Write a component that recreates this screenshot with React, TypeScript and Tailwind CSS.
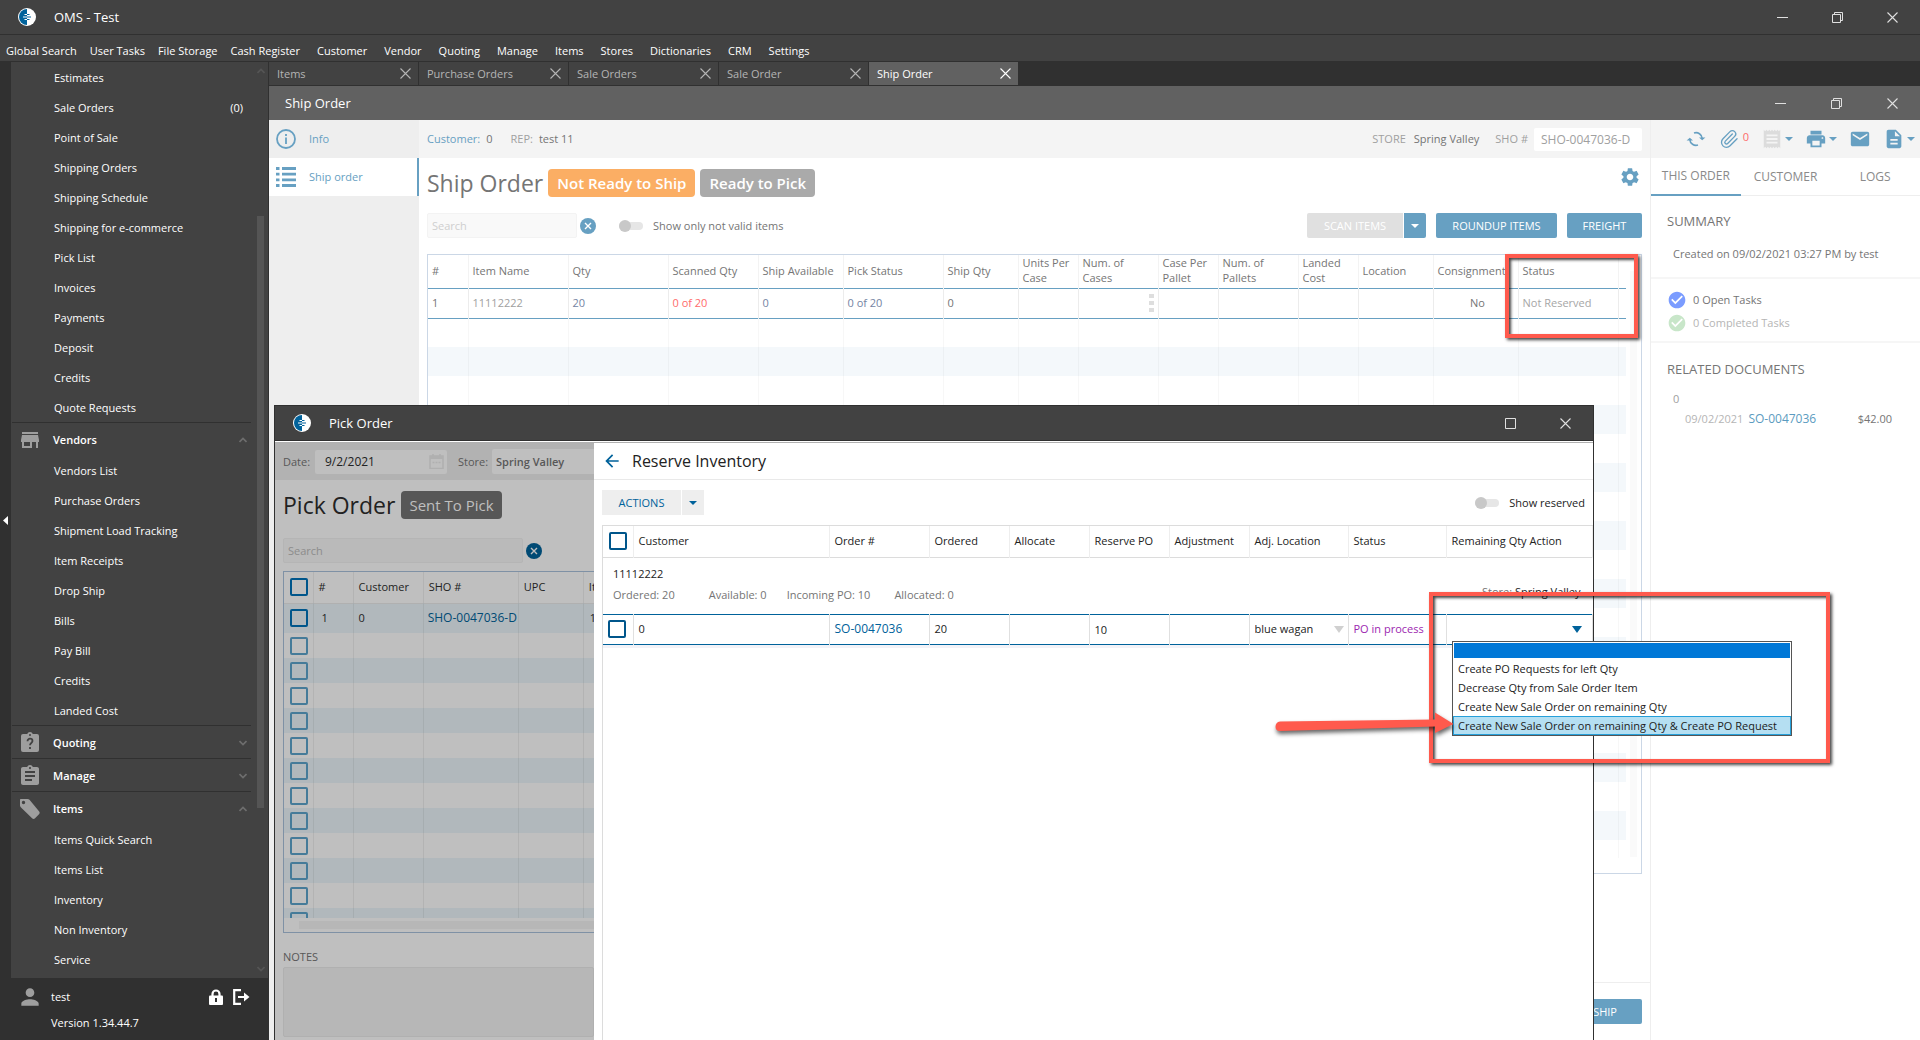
import type { ReactNode } from 'react'
import { Paperclip } from 'lucide-react'
import {
  MdArrowBack,
  MdAssignment,
  MdCheckCircle,
  MdDescription,
  MdEmail,
  MdPerson,
  MdPrint,
  MdReceipt,
  MdSettings,
  MdStore,
} from 'react-icons/md'

const menuItems = [
  'Global Search', 'User Tasks', 'File Storage', 'Cash Register', 'Customer', 'Vendor', 'Quoting',
  'Manage', 'Items', 'Stores', 'Dictionaries', 'CRM', 'Settings',
]

const tabs = ['Items', 'Purchase Orders', 'Sale Orders', 'Sale Order', 'Ship Order']

const customerLinks = [
  'Estimates', 'Sale Orders', 'Point of Sale', 'Shipping Orders', 'Shipping Schedule',
  'Shipping for e-commerce', 'Pick List', 'Invoices', 'Payments', 'Deposit', 'Credits', 'Quote Requests',
]

const vendorLinks = [
  'Vendors List', 'Purchase Orders', 'Shipment Load Tracking', 'Item Receipts', 'Drop Ship', 'Bills',
  'Pay Bill', 'Credits', 'Landed Cost',
]

const itemLinks = ['Items Quick Search', 'Items List', 'Inventory', 'Non Inventory', 'Service']

const shipColumns = [
  { label: '#', width: 'w-[40px]', value: '1', tone: 'text-[#757575]' },
  { label: 'Item Name', width: 'w-[100px]', value: '11112222', tone: 'font-medium text-[#a0a0a0]' },
  { label: 'Qty', width: 'w-[100px]', value: '20', tone: 'text-[#7484a3]' },
  { label: 'Scanned Qty', width: 'w-[90px]', value: '0 of 20', tone: 'text-[#ff6b6b]' },
  { label: 'Ship Available', width: 'w-[85px]', value: '0', tone: 'text-[#7484a3]' },
  { label: 'Pick Status', width: 'w-[100px]', value: '0 of 20', tone: 'text-[#7484a3]' },
  { label: 'Ship Qty', width: 'w-[75px]', value: '0', tone: 'text-[#757575]' },
  { label: 'Units Per\nCase', width: 'w-[60px]', value: '', tone: '' },
  { label: 'Num. of\nCases', width: 'w-[80px]', value: '', tone: '' },
  { label: 'Case Per\nPallet', width: 'w-[60px]', value: '', tone: '' },
  { label: 'Num. of\nPallets', width: 'w-[80px]', value: '', tone: '' },
  { label: 'Landed\nCost', width: 'w-[60px]', value: '', tone: '' },
  { label: 'Location', width: 'w-[75px]', value: '', tone: '' },
  { label: 'Consignment', width: 'w-[85px]', value: 'No', tone: 'pl-0 text-center text-[#757575]' },
  { label: 'Status', width: 'w-[100px]', value: 'Not Reserved', tone: 'text-[#a6a6a6]' },
]

const pickColumns = [
  { label: '#', width: 'w-[40px]' },
  { label: 'Customer', width: 'w-[70px]' },
  { label: 'SHO #', width: 'w-[95px]' },
  { label: 'UPC', width: 'w-[65px]' },
  { label: 'Item Name', width: 'w-[120px]' },
]

const reserveColumns = [
  { label: 'Customer', width: 'w-[196px]' },
  { label: 'Order #', width: 'w-[100px]' },
  { label: 'Ordered', width: 'w-[80px]' },
  { label: 'Allocate', width: 'w-[80px]' },
  { label: 'Reserve PO', width: 'w-[80px]' },
  { label: 'Adjustment', width: 'w-[80px]' },
  { label: 'Adj. Location', width: 'w-[99px]' },
  { label: 'Status', width: 'w-[98px]' },
  { label: 'Remaining Qty Action', width: '' },
]

const qtyActions = [
  'Create PO Requests for left Qty',
  'Decrease Qty from Sale Order Item',
  'Create New Sale Order on remaining Qty',
  'Create New Sale Order on remaining Qty & Create PO Request',
]

function Logo() {
  return (
    <svg className="size-[18px] shrink-0" viewBox="0 0 18 18" aria-hidden="true">
      <circle cx="9" cy="9" r="9" fill="#fff" />
      <path d="M9 1a8 8 0 0 0 0 16z" fill="#00629b" />
      <path d="M6.500 6.500H9M5 9h4M6.500 11.500H9" stroke="#fff" strokeWidth="1.200" />
      <path d="M9 6.500h2.500M9 9h4M9 11.500h2.500" stroke="#00629b" strokeWidth="1.200" />
      <path d="M7.500 9h3" stroke="#7fb0cd" strokeWidth="1.200" />
    </svg>
  )
}

function CloseIcon({ className = 'size-[11px]' }: { className?: string }) {
  return (
    <svg className={className} viewBox="0 0 11 11" fill="none" stroke="currentColor" aria-hidden="true">
      <path d="M.5.5l10 10M10.5.5l-10 10" strokeWidth="1.1" />
    </svg>
  )
}

function ClearIcon() {
  return (
    <svg className="size-2" viewBox="0 0 8 8" fill="none" stroke="currentColor" aria-hidden="true">
      <path d="M1 1l6 6M7 1L1 7" strokeWidth="1.400" />
    </svg>
  )
}

function Caret({ className = 'text-[#67a0c2]' }: { className?: string }) {
  return (
    <svg className={`h-1 w-2 shrink-0 ${className}`} viewBox="0 0 8 4" aria-hidden="true">
      <path d="M0 0h8L4 4z" fill="currentColor" />
    </svg>
  )
}

function Chevron({ up = false, className = 'text-[#6e6e6e]' }: { up?: boolean; className?: string }) {
  return (
    <svg className={`h-[6px] w-2 shrink-0 ${className}`} viewBox="0 0 8 6" fill="none" stroke="currentColor" aria-hidden="true">
      <path d={up ? 'M.5 5L4 1.500l3.500 3.500' : 'M.5 1L4 4.500 7.500 1'} strokeWidth="1.700" />
    </svg>
  )
}

function WindowButtons({ kind, width }: { kind: 'full' | 'dialog'; width: string }) {
  const button = `flex h-full items-center justify-center text-[#e0e0e0] ${width}`
  return (
    <div className="ml-auto flex h-full">
      {kind === 'full' && (
        <button className={button} aria-label="Minimize">
          <svg className="size-[11px]" viewBox="0 0 11 11" aria-hidden="true">
            <path d="M0 5.500h11" stroke="currentColor" />
          </svg>
        </button>
      )}
      <button className={button} aria-label="Maximize">
        <svg className="size-[11px]" viewBox="0 0 11 11" fill="none" stroke="currentColor" aria-hidden="true">
          {kind === 'full' ? <path d="M.5 2.500h8v8h-8zM2.500 2.500v-2h8v8h-2" /> : <path d="M.5 .5h10v10h-10z" />}
        </svg>
      </button>
      <button className={button} aria-label="Close">
        <CloseIcon />
      </button>
    </div>
  )
}

function Checkbox({ label, faded = false }: { label: string; faded?: boolean }) {
  return (
    <input
      type="checkbox"
      aria-label={label}
      className={`block size-[18px] appearance-none rounded-xs border-2 ${faded ? 'border-[#457b99]' : 'border-[#00568b]'}`}
    />
  )
}

function Toggle({ label, tone }: { label: string; tone: string }) {
  return (
    <label className={`flex items-center gap-2.5 ${tone}`}>
      <input
        type="checkbox"
        role="switch"
        className="h-2 w-6 appearance-none rounded-full bg-[#e6e6e6] before:-mt-0.5 before:block before:size-3 before:rounded-full before:bg-[#c8c8c8]"
      />
      {label}
    </label>
  )
}

function SidebarLinks({ links }: { links: string[] }) {
  return (
    <ul>
      {links.map((link) => (
        <li key={link}>
          <a href="#" className="flex h-[30px] items-center justify-between pt-0.5 pr-2 pl-[42px]">
            {link}
            {link === 'Sale Orders' && <span>(0)</span>}
          </a>
        </li>
      ))}
    </ul>
  )
}

function SidebarSection({ icon, label, open, children }: { icon: ReactNode; label: string; open?: boolean; children?: ReactNode }) {
  return (
    <section>
      <button className="flex h-[33px] w-full items-center border-t border-[#303030] pt-0.5 pr-1 pl-1.5 font-semibold">
        <span className="w-[35px] text-[#9e9e9e]">{icon}</span>
        <span>{label}</span>
        <span className="ml-auto">
          <Chevron up={open} />
        </span>
      </button>
      {children}
    </section>
  )
}

function Sidebar() {
  return (
    <aside className="flex w-[269px] shrink-0 flex-col border-r border-[#303030] bg-[#303030] text-white">
      <div className="flex min-h-0 flex-1">
        <button className="flex w-[11px] items-center justify-center" aria-label="Collapse sidebar">
          <svg className="h-[9px] w-[5px]" viewBox="0 0 5 9" aria-hidden="true">
            <path d="M5 0v9L0 4.500z" fill="#fff" />
          </svg>
        </button>
        <nav className="min-w-0 flex-1 overflow-hidden bg-[#424242] pr-0.5 pl-px">
          <SidebarLinks links={customerLinks} />
          <SidebarSection icon={<MdStore className="size-6" />} label="Vendors" open>
            <SidebarLinks links={vendorLinks} />
          </SidebarSection>
          <SidebarSection
            label="Quoting"
            icon={
              <svg className="size-6" viewBox="0 0 24 24" fill="currentColor" aria-hidden="true">
                <path d="M19 3h-4.200a3 3 0 0 0-5.600 0H5a2 2 0 0 0-2 2v14a2 2 0 0 0 2 2h14a2 2 0 0 0 2-2V5a2 2 0 0 0-2-2zm-7 0a1 1 0 1 1 0 2 1 1 0 0 1 0-2z" />
                <path d="M9.500 10.200c0-3.400 5-3.200 5-.2 0 2-2.500 2-2.500 4.200M12 16v2" fill="none" stroke="#424242" strokeWidth="1.800" />
              </svg>
            }
          />
          <SidebarSection icon={<MdAssignment className="size-6" />} label="Manage" />
          <SidebarSection
            label="Items"
            open
            icon={
              <svg className="size-6" viewBox="0 0 24 24" fill="currentColor" aria-hidden="true">
                <path d="M3 2h6.500c.8 0 1.500.3 2 .8l9.700 11.700c.7.800.6 2-.2 2.700L16.800 21.500c-.8.700-2 .600-2.700-.2L3 10.500C2.400 10 2 9.300 2 8.500V3c0-.6.4-1 1-1zm2.500 1.800a1.700 1.700 0 1 0 0 3.400 1.700 1.700 0 0 0 0-3.400z" />
              </svg>
            }
          >
            <SidebarLinks links={itemLinks} />
          </SidebarSection>
        </nav>
        <div className="flex w-[15px] flex-col items-center bg-[#424242] py-1.5">
          <Chevron up className="text-[#555]" />
          <span className="mt-[142px] mb-[158px] w-[7px] flex-1 bg-[#555]" />
          <Chevron className="text-[#555]" />
        </div>
      </div>
      <footer className="h-[62px] pl-[17px] font-medium">
        <div className="flex h-[37px] items-center pr-[18px]">
          <MdPerson className="size-[26px] text-[#9e9e9e]" />
          <span className="ml-2">test</span>
          <button className="ml-auto" aria-label="Lock">
            <svg className="h-4 w-3.5" viewBox="0 0 14 16" aria-hidden="true">
              <path d="M3.500 8V5a3.500 3.500 0 0 1 7 0v3" fill="none" stroke="#fff" strokeWidth="2.200" />
              <rect y="6.500" width="14" height="9.500" rx="1" fill="#fff" />
              <path d="M6 9h2v4H6z" fill="#303030" />
            </svg>
          </button>
          <button className="ml-2.5" aria-label="Log out">
            <svg className="h-4 w-[17px]" viewBox="0 0 17 16" fill="none" stroke="#fff" strokeWidth="2.200" aria-hidden="true">
              <path d="M8 1.200H1.200v13.600H8M5 8h9" />
              <path d="M11 3.500L16.500 8 11 12.500z" fill="#fff" stroke="none" />
            </svg>
          </button>
        </div>
        <p className="pl-[34px]">Version 1.34.44.7</p>
      </footer>
    </aside>
  )
}

function ShipTable() {
  return (
    <div className="mb-[108px] flex min-h-0 flex-1 border border-[#cbd7e6]">
      <div className="mb-[15px] min-w-0 flex-1 overflow-hidden">
        <table className="w-full table-fixed border-collapse text-left">
          <colgroup>
            {shipColumns.map((col) => (
              <col key={col.label} className={col.width} />
            ))}
            <col />
          </colgroup>
          <thead>
            <tr className="h-[33px] border-b border-[#67a0c2]">
              {shipColumns.map((col) => (
                <th key={col.label} className="overflow-hidden border-r border-[#f3f3f3] p-0 pb-0.5 pl-1 leading-[15px] font-normal whitespace-pre text-[#757575]">
                  {col.label}
                </th>
              ))}
              <th className="p-0" />
            </tr>
          </thead>
          <tbody>
            <tr className="h-[30px] border-b border-[#67a0c2]">
              {shipColumns.map((col) => (
                <td key={col.label} className={`border-r border-[#ececec] p-0 pl-1 ${col.tone}`}>
                  {col.label === 'Num. of\nCases' ? (
                    <span className="mr-1 ml-auto grid w-[5px] gap-[3px]">
                      <i className="h-1 bg-[#dedede]" />
                      <i className="h-1 bg-[#dedede]" />
                      <i className="h-1 bg-[#dedede]" />
                    </span>
                  ) : (
                    col.value
                  )}
                </td>
              ))}
              <td className="p-0" />
            </tr>
            {Array.from({ length: 19 }, (_, row) => (
              <tr key={row} className="h-[29px] even:bg-white odd:bg-[#f4f8fb]">
                {shipColumns.map((col) => (
                  <td key={col.label} className="border-r border-black/3 p-0" />
                ))}
                <td className="p-0" />
              </tr>
            ))}
          </tbody>
        </table>
      </div>
      <div className="flex w-[15px] flex-col items-center py-4">
        <span className="w-[7px] flex-1 bg-[#fafafa]" />
      </div>
    </div>
  )
}

function ShipOrder() {
  const primary = 'h-[25px] rounded-xs bg-[#67a0c2] text-white'
  const badge = 'flex h-7 items-center rounded-sm px-[9px] text-[15px] font-semibold whitespace-nowrap text-white'
  return (
    <main className="flex min-w-0 flex-1 flex-col bg-white text-[#757575]">
      <header className="flex h-[38px] items-center bg-[#f4f4f4] pr-2 pl-2">
        <span className="text-[#67a0c2]">Customer:</span>
        <span className="ml-1.5">0</span>
        <span className="ml-[18px] text-[#a0a0a0]">REP:</span>
        <span className="ml-1.5">test 11</span>
        <span className="ml-auto text-[#a0a0a0]">STORE</span>
        <span className="ml-2">Spring Valley</span>
        <label className="ml-4 flex items-center gap-1.5 text-[#a0a0a0]">
          SHO #
          <input className="h-[23px] w-[108px] rounded-xs bg-white px-[7px] text-xs" defaultValue="SHO-0047036-D" />
        </label>
      </header>
      <div className="flex min-h-0 flex-1 flex-col pr-2 pl-2">
        <div className="flex h-[50px] items-center gap-[5px]">
          <h1 className="text-[23px] text-[#757575]">Ship Order</h1>
          <span className={`bg-[#fbae64] ${badge}`}>Not Ready to Ship</span>
          <span className={`bg-[#aaa] ${badge}`}>Ready to Pick</span>
          <button className="mr-px mb-3 ml-auto text-[#67a0c2]" aria-label="Settings">
            <MdSettings className="size-[22px]" />
          </button>
        </div>
        <div className="mt-[5px] mb-4 flex h-[25px] items-center">
          <input
            className="h-[25px] w-[150px] rounded-xs border border-[#f3f3f3] bg-[#f9f9f9] px-1 placeholder:text-[#cfcfcf]"
            placeholder="Search"
            aria-label="Search items"
          />
          <button className="ml-[3px] flex size-4 items-center justify-center rounded-full bg-[#67a0c2] text-white" aria-label="Clear search">
            <ClearIcon />
          </button>
          <div className="ml-[23px]">
            <Toggle label="Show only not valid items" tone="text-[#757575]" />
          </div>
          <button className="ml-auto h-[25px] w-24 rounded-l-xs bg-[#e0e0e0] text-white" disabled>
            SCAN ITEMS
          </button>
          <button className="ml-px flex h-[25px] w-[22px] items-center justify-center rounded-r-xs bg-[#67a0c2]" aria-label="Scan options">
            <Caret className="text-white" />
          </button>
          <button className={`ml-2.5 w-[121px] ${primary}`}>ROUNDUP ITEMS</button>
          <button className={`ml-2.5 w-[75px] ${primary}`}>FREIGHT</button>
        </div>
        <ShipTable />
      </div>
      <footer className="flex h-[58px] items-center justify-end border-t border-[#eee] pr-2">
        <button className={`px-[25px] ${primary}`}>SHIP</button>
      </footer>
    </main>
  )
}

function OrderInfo() {
  return (
    <aside className="w-[270px] shrink-0 border-l border-[#eee] bg-white text-[#757575]">
      <div className="flex h-[38px] items-center justify-end gap-3 bg-[#f4f4f4] pr-[5px] text-[#67a0c2]">
        <button aria-label="Refresh">
          <svg className="size-[22px]" viewBox="0 0 22 22" fill="none" stroke="currentColor" strokeWidth="1.600" aria-hidden="true">
            <path d="M17.200 10.500A6.200 6.200 0 0 0 9 5M4.800 11.500A6.200 6.200 0 0 0 13 17" />
            <path d="M14 9.500l3.200 2.800 3.200-2.800zM1.600 12.500l3.200-2.800L8 12.500z" fill="currentColor" stroke="none" />
          </svg>
        </button>
        <button className="flex items-center gap-1" aria-label="Attachments">
          <Paperclip className="size-5" strokeWidth={1.600} />
          <span className="mb-1 text-[#ff6b6b]">0</span>
        </button>
        <button className="flex items-center gap-0.5" aria-label="Receipt">
          <MdReceipt className="size-[22px] text-[#dcdcdc]" />
          <Caret />
        </button>
        <button className="flex items-center gap-0.5" aria-label="Print">
          <MdPrint className="size-[22px]" />
          <Caret />
        </button>
        <button aria-label="Email">
          <MdEmail className="size-[22px]" />
        </button>
        <button className="flex items-center gap-0.5" aria-label="Documents">
          <MdDescription className="size-[22px]" />
          <Caret />
        </button>
      </div>
      <div className="grid h-[38px] grid-cols-3 border-b border-[#eee] text-xs text-[#8a8a8a]">
        <button className="-mb-px border-b-2 border-[#67a0c2]">THIS ORDER</button>
        <button>CUSTOMER</button>
        <button>LOGS</button>
      </div>
      <section className="h-[83px] border-b-2 border-[#f6f6f6] pt-[15px] pl-4">
        <h2 className="text-[13px] leading-5 font-medium">SUMMARY</h2>
        <p className="mt-[15px] pl-1.5 leading-4">Created on 09/02/2021 03:27 PM by test</p>
      </section>
      <section className="h-[64px] border-b-2 border-[#f6f6f6] pt-2.5 pl-4">
        <p className="flex h-[22px] items-center gap-1.5">
          <MdCheckCircle className="size-5 text-[#7b9cff]" />0 Open Tasks
        </p>
        <p className="flex h-6 items-center gap-1.5 text-[#b5b5b5]">
          <MdCheckCircle className="size-5 text-[#c8e6c9]" />0 Completed Tasks
        </p>
      </section>
      <section className="pt-4 pr-7 pl-4">
        <h2 className="text-[13px] leading-5">RELATED DOCUMENTS</h2>
        <p className="mt-3 pl-1.5 leading-4 text-[#a0a0a0]">0</p>
        <p className="mt-1 flex pl-[18px] leading-4">
          <span className="text-[#b5b5b5]">09/02/2021</span>
          <a href="#" className="ml-[5px] text-xs text-[#5b9bc0]">SO-0047036</a>
          <span className="ml-auto">$42.00</span>
        </p>
      </section>
    </aside>
  )
}

function PickPane() {
  const line = 'border-r border-black/6 p-0'
  return (
    <div className="flex w-[319px] shrink-0 flex-col overflow-hidden bg-[#bfbfbf] text-[#222]">
      <div className="flex h-[37px] shrink-0 items-center bg-[#b2b2b2] pl-2 text-[#575757]">
        <label htmlFor="pick-date" className="w-8 shrink-0">Date:</label>
        <span className="flex h-6 w-[132px] shrink-0 items-center rounded-xs bg-[#bfbfbf] pr-[3px]">
          <input id="pick-date" className="min-w-0 flex-1 pl-2.5 text-xs text-[#222]" defaultValue="9/2/2021" />
          <svg className="size-[15px]" viewBox="0 0 15 15" fill="none" stroke="#b0b0b0" aria-hidden="true">
            <path d="M1 2h13v12.500H1zM4 0v3M11 0v3" strokeWidth="1.500" />
            <path d="M1 3.500h13" strokeWidth="3" />
            <path d="M3.500 8.500h8" strokeDasharray="2 1" strokeWidth="1.500" />
          </svg>
        </span>
        <label htmlFor="pick-store" className="ml-[11px] w-[34px] shrink-0">Store:</label>
        <input id="pick-store" className="h-[25px] min-w-0 flex-1 rounded-l-xs bg-[#bfbfbf] pl-1 font-semibold" defaultValue="Spring Valley" />
      </div>
      <div className="flex h-[50px] shrink-0 items-center gap-1.5 pl-2">
        <h2 className="text-[23px] whitespace-nowrap">Pick Order</h2>
        <span className="flex h-7 items-center rounded-sm bg-[#575757] px-2 text-[15px] font-medium whitespace-nowrap text-[#bfbfbf]">Sent To Pick</span>
      </div>
      <div className="my-2 flex shrink-0 items-center gap-[3px] pl-2">
        <input
          className="h-[25px] w-60 rounded-xs border border-[#b5b5b5] bg-[#bababa] px-1 placeholder:text-[#8c8c8c]"
          placeholder="Search"
          aria-label="Search pick items"
        />
        <button className="flex size-4 items-center justify-center rounded-full bg-[#004a74] text-[#bfbfbf]" aria-label="Clear search">
          <ClearIcon />
        </button>
      </div>
      <div className="ml-2 flex min-h-0 flex-1 flex-col border-y border-l border-[#7f91a5]">
        <div className="min-h-0 flex-1 overflow-hidden">
          <table className="w-[420px] table-fixed border-collapse text-left">
            <colgroup>
              <col className="w-[29px]" />
              {pickColumns.map((col) => (
                <col key={col.label} className={col.width} />
              ))}
            </colgroup>
            <thead>
              <tr className="h-[31px] border-b border-[#b0b0b0]">
                <th className={`${line} pl-1.5`}>
                  <Checkbox label="Select all rows" />
                </th>
                {pickColumns.map((col) => (
                  <th key={col.label} className={`${line} pl-[5px] font-normal`}>{col.label}</th>
                ))}
              </tr>
            </thead>
            <tbody>
              <tr className="h-[30px] bg-[#b1b8bc]">
                <td className={`${line} pl-1.5`}>
                  <Checkbox label="Select row 1" />
                </td>
                <td className={`${line} pl-2`}>1</td>
                <td className={`${line} pl-[5px]`}>0</td>
                <td className={`${line} pl-1`}>
                  <a href="#" className="text-xs text-[#004a74]">SHO-0047036-D</a>
                </td>
                <td className={line} />
                <td className={`${line} pl-1.5`}>11112222</td>
              </tr>
              {Array.from({ length: 12 }, (_, row) => (
                <tr key={row} className="h-[25px] even:bg-[#bfbfbf] odd:bg-[#b1b8bc]">
                  <td className={`${line} pl-1.5`}>
                    <Checkbox label={`Select row ${row + 2}`} faded />
                  </td>
                  {pickColumns.map((col) => (
                    <td key={col.label} className={line} />
                  ))}
                </tr>
              ))}
            </tbody>
          </table>
        </div>
        <div className="flex h-[14px] items-center pl-[15px]">
          <span className="h-2 flex-1 bg-[#b7b7b7]" />
        </div>
      </div>
      <label htmlFor="pick-notes" className="mt-4 mb-0.5 ml-2 leading-4 text-[#575757]">NOTES</label>
      <textarea id="pick-notes" className="mb-[3px] ml-2 h-[70px] shrink-0 resize-none rounded-xs border border-[#b0b0b0] bg-[#b7b7b7]" />
    </div>
  )
}

function ReservePane() {
  const cell = 'border-r border-[#e0e0e0] p-0 pl-[5px]'
  return (
    <section className="flex min-w-0 flex-1 flex-col bg-white text-[#222]">
      <div className="flex h-[37px] items-center border-b border-[#e9e9e9] pl-2">
        <button className="text-[#00629b]" aria-label="Back">
          <MdArrowBack className="size-5" />
        </button>
        <h2 className="ml-2.5 text-base">Reserve Inventory</h2>
      </div>
      <div className="mt-2.5 flex h-[25px] items-center pr-2 pl-2 text-[#00629b]">
        <button className="h-[25px] w-[79px] bg-[#eee]">ACTIONS</button>
        <button className="ml-px flex h-[25px] w-[22px] items-center justify-center bg-[#eee]" aria-label="More actions">
          <Caret className="text-[#00629b]" />
        </button>
        <div className="ml-auto">
          <Toggle label="Show reserved" tone="text-[#222]" />
        </div>
      </div>
      <div className="mt-2.5 ml-2 flex-1 border-t border-l border-[#dcdcdc]">
        <table className="w-full table-fixed border-collapse text-left">
          <colgroup>
            <col className="w-[30px]" />
            {reserveColumns.map((col) => (
              <col key={col.label} className={col.width} />
            ))}
          </colgroup>
          <thead>
            <tr className="h-[31px] border-b border-[#dcdcdc]">
              <th className="border-r border-[#eee] p-0 pl-1.5">
                <Checkbox label="Select all orders" />
              </th>
              {reserveColumns.map((col) => (
                <th key={col.label} className="border-r border-[#eee] p-0 pl-[5px] font-normal whitespace-nowrap">{col.label}</th>
              ))}
            </tr>
          </thead>
          <tbody>
            <tr className="h-[57px] border-b border-[#00629b]">
              <td colSpan={10} className="p-0 pr-3 pb-0.5 pl-2.5">
                <div className="font-medium">11112222</div>
                <div className="mt-[5px] flex text-[#757575]">
                  <span>Ordered: 20</span>
                  <span className="ml-[34px]">Available: 0</span>
                  <span className="ml-5">Incoming PO: 10</span>
                  <span className="ml-6">Allocated: 0</span>
                  <span className="-mt-[3px] ml-auto">
                    Store: <span className="text-[#222]">Spring Valley</span>
                  </span>
                </div>
              </td>
            </tr>
            <tr className="h-[30px] border-b border-[#00629b]">
              <td className={`${cell} pl-1.5`}>
                <Checkbox label="Select SO-0047036" />
              </td>
              <td className={`${cell} pl-1.5`}>0</td>
              <td className={cell}>
                <a href="#" className="text-xs font-medium text-[#00629b]">SO-0047036</a>
              </td>
              <td className={`${cell} pl-2`}>20</td>
              <td className={cell} />
              <td className={`${cell} pt-0.5 pl-2`}>10</td>
              <td className={cell} />
              <td className={`${cell} pr-1 pl-2`}>
                <span className="flex items-center">
                  <select className="min-w-0 flex-1 appearance-none" aria-label="Adjustment location">
                    <option>blue wagan</option>
                  </select>
                  <svg className="h-[7px] w-[10px]" viewBox="0 0 10 7" aria-hidden="true">
                    <path d="M0 0h10L5 7z" fill="#d0d0d0" />
                  </svg>
                </span>
              </td>
              <td className={`${cell} whitespace-nowrap text-[#9c27b0]`}>PO in process</td>
              <td className={`${cell} pr-2.5`}>
                <span className="flex items-center">
                  <select className="min-w-0 flex-1 appearance-none" aria-label="Remaining Qty Action">
                    <option />
                  </select>
                  <svg className="h-[7px] w-[10px]" viewBox="0 0 10 7" aria-hidden="true">
                    <path d="M0 0h10L5 7z" fill="#00629b" />
                  </svg>
                </span>
              </td>
            </tr>
          </tbody>
        </table>
        <div className="h-[3px] bg-[#f3f3f8]" />
      </div>
    </section>
  )
}

function PickOrderWindow() {
  return (
    <div className="absolute top-[405px] right-[326px] bottom-0 left-[274px] flex flex-col border border-b-0 border-[#303030] bg-white">
      <div className="flex h-[35px] shrink-0 items-center border-b border-[#303030] bg-[#424242] pl-[18px] text-[13px] text-white">
        <Logo />
        <span className="ml-[18px]">Pick Order</span>
        <WindowButtons kind="dialog" width="w-[55px]" />
      </div>
      <div className="mt-px flex min-h-0 flex-1 border-t border-[#b0b0b0]">
        <PickPane />
        <ReservePane />
      </div>
    </div>
  )
}

function QtyActionMenu() {
  return (
    <ul role="listbox" className="absolute top-[641px] right-[128px] left-[1452px] border border-[#555] bg-white text-[#222]">
      <li role="option" aria-selected="true" className="m-px h-[15px] bg-[#0078d7]" />
      {qtyActions.map((action, index) => (
        <li
          key={action}
          role="option"
          aria-selected="false"
          className={
            index === qtyActions.length - 1
              ? 'h-[19px] border border-[#26a0da] bg-[#b5dff2] px-1 leading-[17px] whitespace-nowrap'
              : 'h-[19px] border border-transparent px-1 leading-[17px] whitespace-nowrap'
          }
        >
          {action}
        </li>
      ))}
    </ul>
  )
}

/* Highlight frames and the pointer drawn over the windows */
function Callouts() {
  const frame = 'pointer-events-none absolute border-4 border-[#ff5a4d] shadow-[2px_2px_3px_#000b,inset_2px_2px_3px_#000b]'
  return (
    <>
      <div className={`${frame} top-[254px] right-[282px] h-[84px] w-[133px]`} />
      <div className={`${frame} top-[592px] right-[90px] h-[171px] w-[401px]`} />
      <svg className="pointer-events-none absolute top-[707px] left-[1270px] h-8 w-[190px] drop-shadow-[1px_3px_2px_#0009]" viewBox="0 0 190 32" aria-hidden="true">
        <path d="M10 14.500L165 12.500V5.500l18.500 11.500-18.500 9v-6.500L10 24c-6 .5-6-9 0-9.500z" fill="#ff5a4d" />
      </svg>
    </>
  )
}

export default function App() {
  return (
    <div className="relative flex h-screen flex-col overflow-hidden bg-white font-['Open_Sans',sans-serif] text-[11px] leading-4">
      <header className="bg-[#424242] text-white">
        <div className="flex h-[35px] items-center border-b border-[#303030] pl-[18px] text-[13px]">
          <Logo />
          <span className="ml-[18px]">OMS - Test</span>
          <WindowButtons kind="full" width="w-[55px]" />
        </div>
        <nav className="flex h-[26px] items-center gap-[17px] pt-[5px] pl-1.5">
          {menuItems.map((item) => (
            <a key={item} href="#" className="[&:nth-child(-n+3)]:-mr-1">{item}</a>
          ))}
        </nav>
      </header>
      <div className="flex min-h-0 flex-1 border-t border-[#303030]">
        <Sidebar />
        <div className="flex min-w-0 flex-1 flex-col">
          <div className="flex h-6 bg-[#303030] pb-px">
            {tabs.map((tab) => (
              <div
                key={tab}
                className={
                  tab === 'Ship Order'
                    ? 'flex w-[150px] items-center justify-between border-r border-[#303030] bg-[#616161] pr-[7px] pl-2 text-white'
                    : 'flex w-[150px] items-center justify-between border-r border-[#303030] bg-[#424242] pr-[7px] pl-2 text-[#b5b5b5]'
                }
              >
                <a href="#">{tab}</a>
                <button aria-label={`Close ${tab}`}>
                  <CloseIcon />
                </button>
              </div>
            ))}
          </div>
          <div className="flex h-[34px] items-center bg-[#616161] pl-4 text-[13px] text-white">
            Ship Order
            <WindowButtons kind="full" width="w-14" />
          </div>
          <div className="flex min-h-0 flex-1">
            <nav className="w-[150px] shrink-0 bg-[#eee] text-[#67a0c2]">
              <a href="#" className="flex h-[38px] items-center pl-[7px]">
                <svg className="size-5" viewBox="0 0 20 20" fill="none" stroke="currentColor" strokeWidth="1.800" aria-hidden="true">
                  <circle cx="10" cy="10" r="9" />
                  <path d="M10 5v2M10 8.500V15" />
                </svg>
                <span className="ml-[13px]">Info</span>
              </a>
              <a href="#" className="flex h-[38px] items-center border-r-2 border-[#67a0c2] bg-white pl-[7px]">
                <svg className="size-5" viewBox="0 0 20 20" stroke="currentColor" strokeWidth="2.800" aria-hidden="true">
                  <path d="M0 1.500h3.500M6 1.500h14M0 7.200h3.500M6 7.200h14M0 12.900h3.500M6 12.900h14M0 18.500h3.500M6 18.500h14" />
                </svg>
                <span className="ml-[13px]">Ship order</span>
              </a>
            </nav>
            <ShipOrder />
            <OrderInfo />
          </div>
        </div>
      </div>
      <PickOrderWindow />
      <QtyActionMenu />
      <Callouts />
    </div>
  )
}
